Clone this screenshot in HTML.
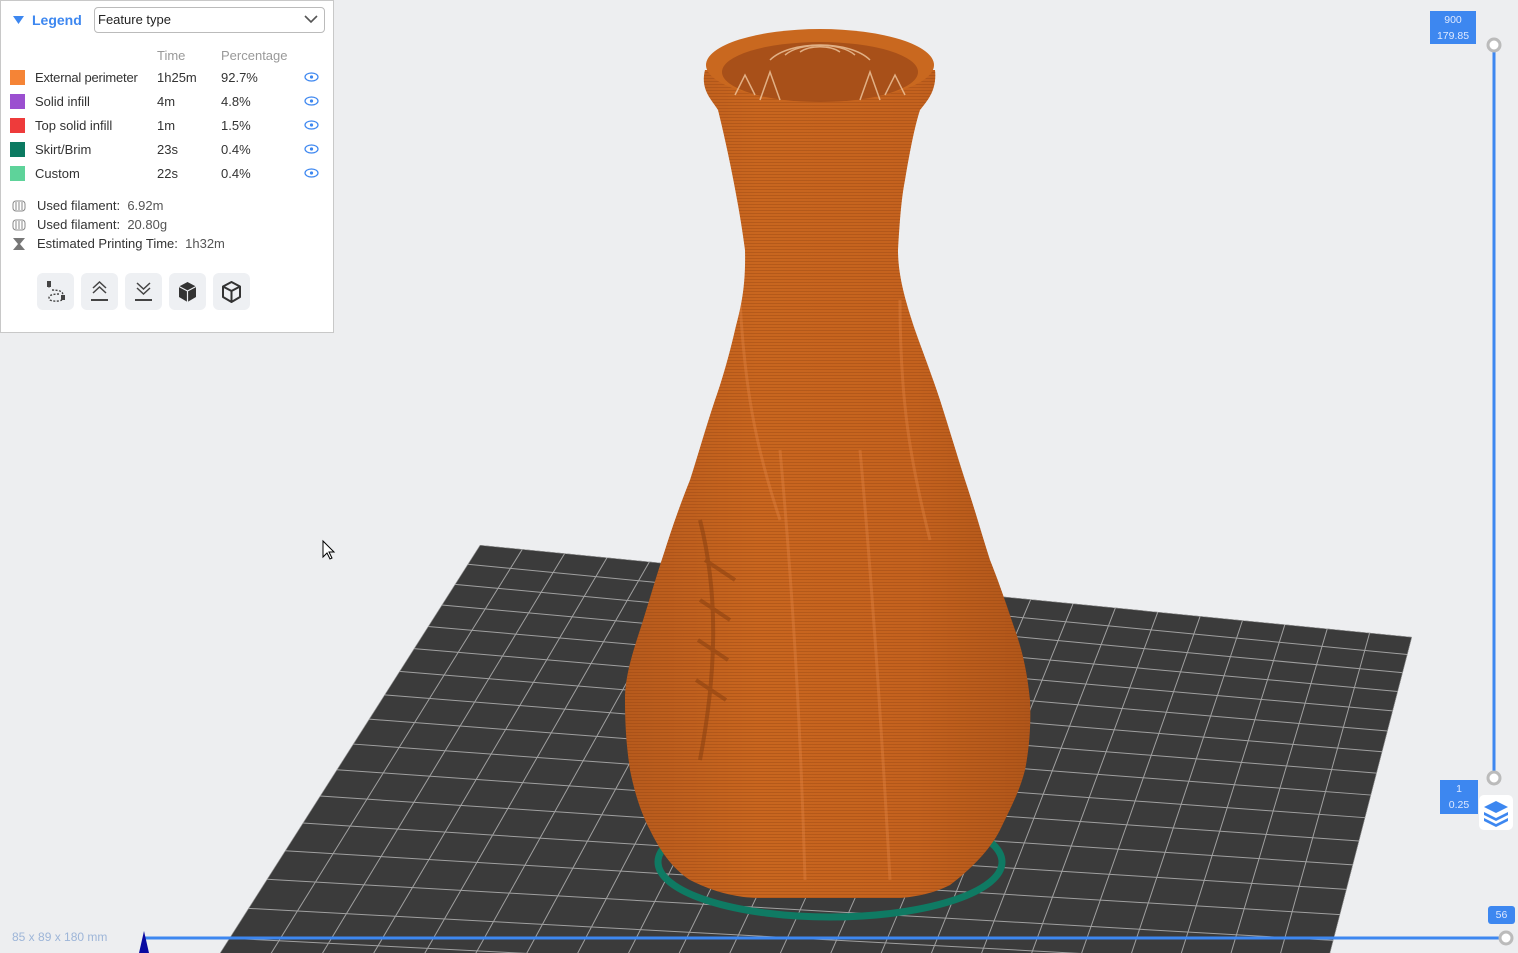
<!DOCTYPE html>
<html><head><meta charset="utf-8"><style>
*{margin:0;padding:0;box-sizing:border-box}
html,body{width:1518px;height:953px;overflow:hidden}
body{background:#edeef0;font-family:"Liberation Sans",sans-serif;position:relative}
#scene{position:absolute;left:0;top:0;display:block}
.panel{position:absolute;left:0;top:0;width:334px;height:333px;background:#fff;border:1px solid #c8c8c8;font-size:13px;color:#333}
.sw{position:absolute;left:9px;width:15px;height:15px}
.t{position:absolute;font-size:13px;color:#333;white-space:nowrap}
.eye{position:absolute;left:303px}
.btn{position:absolute;top:272px;width:37px;height:37px;border-radius:6px;background:#eef0f3}
.tag{position:absolute;background:#3d87f0;color:#dfe9ff;font-size:10.5px;text-align:center;line-height:16px}
</style></head><body>
<svg id="scene" width="1518" height="953">
<defs><clipPath id="bedc"><polygon points="480,545 1412,637 1305,1050 190,1000"/></clipPath>
<linearGradient id="vg" x1="0" x2="1"><stop offset="0" stop-color="#b3581c"/><stop offset="0.35" stop-color="#c9661f"/><stop offset="0.7" stop-color="#c4621e"/><stop offset="1" stop-color="#ad5419"/></linearGradient>
<pattern id="rip" width="8" height="3" patternUnits="userSpaceOnUse"><rect width="8" height="1" fill="#8f4210" opacity=".35"/></pattern>
<clipPath id="vc"><path id="vp" d="M705,70 C700,90 712,100 718,110 C728,150 740,210 745,250 C746,290 740,310 735,330 C728,360 722,380 715,400 C705,430 698,455 690,480 C680,505 673,525 665,550 C655,580 648,605 640,630 C630,660 625,680 625,700 C625,735 628,755 630,770 C635,795 642,815 650,830 C662,855 675,870 690,880 C715,893 740,898 760,898 L900,898 C925,896 940,890 950,885 C970,870 990,850 1000,830 C1012,805 1020,790 1025,770 C1030,745 1031,720 1030,700 C1027,670 1022,650 1015,630 C1005,600 998,580 990,560 C982,535 975,510 965,480 C957,455 948,425 940,400 C930,370 922,350 915,330 C905,300 898,275 898,250 C900,215 902,195 905,180 C910,150 915,125 920,110 C928,100 937,90 935,70 Z"/></clipPath></defs>
<polygon points="480,545 1412,637 1305,1050 190,1000" fill="#3b3b3b"/>
<g id="grid" clip-path="url(#bedc)" stroke="#a0a0a0" stroke-width="1"></g>
<ellipse cx="830" cy="862" rx="172" ry="55" fill="none" stroke="#0f7a63" stroke-width="7"/>
<g clip-path="url(#vc)">
<rect x="600" y="20" width="450" height="900" fill="url(#vg)"/>
<rect x="600" y="20" width="450" height="900" fill="url(#rip)"/>
<path d="M700,520 C720,600 715,680 700,760 M705,560 L735,580 M700,600 L730,620 M698,640 L728,660 M696,680 L726,700" stroke="#7e3a0e" stroke-width="4" fill="none" opacity=".45"/>
<path d="M780,450 C790,560 800,700 805,880 M860,450 C870,560 880,700 890,880 M740,300 C745,400 760,460 780,520 M900,300 C900,400 910,460 930,540" stroke="#e48a4a" stroke-width="3" fill="none" opacity=".35"/>
</g>
<ellipse cx="820" cy="65" rx="114" ry="36" fill="#c9681f"/>
<ellipse cx="820" cy="72" rx="98" ry="30" fill="#a85019"/>
<g stroke="#f0c8a0" stroke-width="1.5" fill="none" opacity=".8">
<path d="M770,60 C790,40 850,40 870,60"/><path d="M785,55 C800,42 840,42 855,55"/><path d="M800,52 C810,45 830,45 840,52"/>
<path d="M735,95 L745,75 L755,95 M760,100 L770,72 L780,100 M860,100 L870,72 L880,100 M885,95 L895,75 L905,95"/>
</g>
<line x1="1494" y1="45" x2="1494" y2="778" stroke="#3d87f0" stroke-width="3"/>
<circle cx="1494" cy="45" r="6" fill="#fff" stroke="#bbb" stroke-width="3"/>
<circle cx="1494" cy="778" r="6" fill="#fff" stroke="#bbb" stroke-width="3"/>
<line x1="145" y1="938" x2="1506" y2="938" stroke="#3d87f0" stroke-width="3"/>
<circle cx="1506" cy="938" r="6" fill="#fff" stroke="#bbb" stroke-width="3"/>
<path d="M144,931 L149,953 L139,953 Z" fill="#0a0aa0"/>
<path d="M323,541 L323,557 L327,553 L330,559 L332,558 L329,552 L334,552 Z" fill="#fff" stroke="#000" stroke-width="1"/>
</svg>
<div class="tag" style="left:1430px;top:11px;width:46px;height:33px;padding-top:1px">900<br>179.85</div>
<div class="tag" style="left:1440px;top:780px;width:38px;height:34px;padding-top:1px">1<br>0.25</div>
<div class="tag" style="left:1488px;top:906px;width:27px;height:18px;line-height:18px;border-radius:3px">56</div>
<div style="position:absolute;left:1479px;top:795px;width:34px;height:35px;background:#fff;border-radius:5px">
<svg width="34" height="35"><path d="M17,6 L29,12 L17,18 L5,12Z M5,17 L17,23 L29,17 L29,20 L17,26 L5,20Z M5,23 L17,29 L29,23 L29,26 L17,32 L5,26Z" fill="#3d87f0"/></svg></div>
<div style="position:absolute;left:12px;top:930px;font-size:12px;color:#9db5d8">85 x 89 x 180 mm</div>
<div class="panel">
<svg style="position:absolute;left:12px;top:15px" width="11" height="9"><path d="M0,0 L11,0 L5.5,8Z" fill="#3d87f0"/></svg>
<div class="t" style="left:31px;top:11px;color:#3d87f0;font-weight:bold;font-size:14px">Legend</div>
<div style="position:absolute;left:93px;top:6px;width:231px;height:26px;border:1px solid #bbb;border-radius:4px;font-size:13px;line-height:24px;padding-left:3px;color:#222">Feature type
<svg style="position:absolute;right:6px;top:7px" width="14" height="9"><path d="M1,1 L7,7 L13,1" fill="none" stroke="#555" stroke-width="1.6"/></svg></div>
<div class="t" style="left:156px;top:47px;color:#999">Time</div>
<div class="t" style="left:220px;top:47px;color:#999">Percentage</div>
<div class="sw" style="top:69px;background:#f58436"></div><div class="t" style="left:34px;top:69px;letter-spacing:-.2px">External perimeter</div><div class="t" style="left:156px;top:69px">1h25m</div><div class="t" style="left:220px;top:69px">92.7%</div>
<div class="sw" style="top:93px;background:#9b4fd0"></div><div class="t" style="left:34px;top:93px">Solid infill</div><div class="t" style="left:156px;top:93px">4m</div><div class="t" style="left:220px;top:93px">4.8%</div>
<div class="sw" style="top:117px;background:#ee3b3b"></div><div class="t" style="left:34px;top:117px">Top solid infill</div><div class="t" style="left:156px;top:117px">1m</div><div class="t" style="left:220px;top:117px">1.5%</div>
<div class="sw" style="top:141px;background:#0b7a61"></div><div class="t" style="left:34px;top:141px">Skirt/Brim</div><div class="t" style="left:156px;top:141px">23s</div><div class="t" style="left:220px;top:141px">0.4%</div>
<div class="sw" style="top:165px;background:#5ed39a"></div><div class="t" style="left:34px;top:165px">Custom</div><div class="t" style="left:156px;top:165px">22s</div><div class="t" style="left:220px;top:165px">0.4%</div>
<svg class="eye" style="top:71px" width="15" height="10"><ellipse cx="7.5" cy="5" rx="6.5" ry="4" fill="none" stroke="#3d87f0" stroke-width="1.2"/><circle cx="7.5" cy="5" r="1.6" fill="#3d87f0"/></svg>
<svg class="eye" style="top:95px" width="15" height="10"><ellipse cx="7.5" cy="5" rx="6.5" ry="4" fill="none" stroke="#3d87f0" stroke-width="1.2"/><circle cx="7.5" cy="5" r="1.6" fill="#3d87f0"/></svg>
<svg class="eye" style="top:119px" width="15" height="10"><ellipse cx="7.5" cy="5" rx="6.5" ry="4" fill="none" stroke="#3d87f0" stroke-width="1.2"/><circle cx="7.5" cy="5" r="1.6" fill="#3d87f0"/></svg>
<svg class="eye" style="top:143px" width="15" height="10"><ellipse cx="7.5" cy="5" rx="6.5" ry="4" fill="none" stroke="#3d87f0" stroke-width="1.2"/><circle cx="7.5" cy="5" r="1.6" fill="#3d87f0"/></svg>
<svg class="eye" style="top:167px" width="15" height="10"><ellipse cx="7.5" cy="5" rx="6.5" ry="4" fill="none" stroke="#3d87f0" stroke-width="1.2"/><circle cx="7.5" cy="5" r="1.6" fill="#3d87f0"/></svg>
<svg style="position:absolute;left:11px;top:199px" width="14" height="12"><rect x="1" y="1" width="12" height="10" rx="3" fill="none" stroke="#888"/><path d="M4,2v8M7,2v8M10,2v8" stroke="#888"/></svg>
<svg style="position:absolute;left:11px;top:218px" width="14" height="12"><rect x="1" y="1" width="12" height="10" rx="3" fill="none" stroke="#888"/><path d="M4,2v8M7,2v8M10,2v8" stroke="#888"/></svg>
<svg style="position:absolute;left:11px;top:236px" width="14" height="14"><path d="M1,1 H13 L8,7 L13,13 H1 L6,7Z" fill="#777"/></svg>
<div class="t" style="left:36px;top:197px">Used filament:&nbsp; <span style="color:#555">6.92m</span></div>
<div class="t" style="left:36px;top:216px">Used filament:&nbsp; <span style="color:#555">20.80g</span></div>
<div class="t" style="left:36px;top:235px">Estimated Printing Time:&nbsp; <span style="color:#555">1h32m</span></div>
<div class="btn" style="left:36px"><svg width="37" height="37"><path d="M12,9v6 M15,17 c10,0 12,3 10,6 M22,21 c-8,0 -12,2 -9,6 c4,2 10,1 12,0" fill="none" stroke="#444" stroke-width="1.4" stroke-dasharray="2 1.5"/><rect x="10" y="8" width="4" height="6" fill="#444"/><rect x="24" y="22" width="4" height="5" fill="#444"/></svg></div>
<div class="btn" style="left:80px"><svg width="37" height="37"><path d="M12,15 L18.5,9 L25,15 M12,20 L18.5,14 L25,20" fill="none" stroke="#444" stroke-width="1.5"/><path d="M10,27h17" stroke="#444" stroke-width="2"/></svg></div>
<div class="btn" style="left:124px"><svg width="37" height="37"><path d="M12,10 L18.5,16 L25,10 M12,15 L18.5,21 L25,15" fill="none" stroke="#444" stroke-width="1.5"/><path d="M10,27h17" stroke="#444" stroke-width="2"/></svg></div>
<div class="btn" style="left:168px"><svg width="37" height="37"><path d="M18.5,9 L27,13.5 V24 L18.5,29 L10,24 V13.5Z" fill="#333"/><path d="M10,13.5 L18.5,18 L27,13.5 M18.5,18V29" stroke="#eef0f3" stroke-width="1.2" fill="none"/></svg></div>
<div class="btn" style="left:212px"><svg width="37" height="37"><path d="M18.5,9 L27,13.5 V24 L18.5,29 L10,24 V13.5Z M10,13.5 L18.5,18 L27,13.5 M18.5,18V29" stroke="#333" stroke-width="2" fill="none" stroke-linejoin="round"/></svg></div>
</div>
<script>
var g=document.getElementById('grid'),A=[480,545],B=[1412,637],C=[1305,1050],D=[190,1000],N=22,M=18;
function L(p,q,t){return[p[0]+(q[0]-p[0])*t,p[1]+(q[1]-p[1])*t]}
var s='';
for(var i=0;i<=N;i++){var t=i/N,a=L(A,B,t),b=L(D,C,t);s+='<line x1="'+a[0]+'" y1="'+a[1]+'" x2="'+b[0]+'" y2="'+b[1]+'"/>';}
for(var j=0;j<=M;j++){var u=j/M;u=u*(0.75+0.25*u);var a=L(A,D,u),b=L(B,C,u);s+='<line x1="'+a[0]+'" y1="'+a[1]+'" x2="'+b[0]+'" y2="'+b[1]+'"/>';}
g.innerHTML=s;
</script>
</body></html>
